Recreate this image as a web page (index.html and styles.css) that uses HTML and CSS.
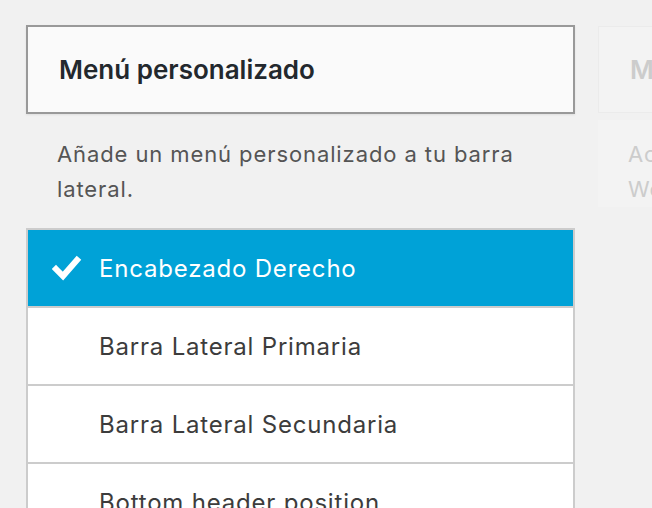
FILE: index.html
```html
<!DOCTYPE html>
<html lang="es">
<head>
    <meta charset="UTF-8">
    <meta name="viewport" content="width=device-width, initial-scale=1.0">
    <title>Menú personalizado</title>
    <link rel="stylesheet" href="styles.css">
</head>
<body>
    <div class="panels">
        <section class="panel">
            <div class="panel-title"><h2>Menú personalizado</h2></div>
            <p class="panel-desc">Añade un menú personalizado a tu barra lateral.</p>
            <ul class="choices">
                <li class="choice selected">
                    <span class="check">
                        <svg width="30" height="26" viewBox="0 0 30 26"><polyline points="4,14 11,21 25,5" fill="none" stroke="#fff" stroke-width="6" stroke-linecap="square"/></svg>
                    </span>
                    Encabezado Derecho
                </li>
                <li class="choice"><span class="check"></span>Barra Lateral Primaria</li>
                <li class="choice"><span class="check"></span>Barra Lateral Secundaria</li>
                <li class="choice"><span class="check"></span>Bottom header position</li>
            </ul>
        </section>

        <!-- siguiente widget, fuera de foco -->
        <section class="panel faded">
            <div class="panel-title"><h2>Meta</h2></div>
            <p class="panel-desc">Acceso, RSS y enlaces de WordPress.org.</p>
        </section>
    </div>
</body>
</html>
```

FILE: styles.css
```css
body {
    margin: 0;
    background-color: #f1f1f1;
    font-family: 'Inter', 'Liberation Sans', Arial, sans-serif;
    overflow: hidden;
}

.panels {
    display: flex;
    gap: 23px;
    padding: 25px 0 0 26px;
}

.panel {
    flex: 0 0 549px;
}

.panel-title {
    height: 85px;
    display: flex;
    align-items: center;
    padding-left: 31px;
    background-color: #fafafa;
    border: 2px solid #999;
    box-shadow: 0 1px 2px rgba(0, 0, 0, 0.08);
}

.panel-title h2 {
    margin: 0;
    font-size: 26px;
    font-weight: 600;
    color: #23282d;
}

.panel-desc {
    margin: 23px 0 21px;
    padding: 0 31px;
    font-size: 22px;
    letter-spacing: 0.9px;
    line-height: 35px;
    color: #555;
}

.choices {
    list-style: none;
    margin: 0;
    padding: 0;
    border: 2px solid #ccc;
    background-color: #fff;
}

.choice {
    height: 76px;
    display: flex;
    align-items: center;
    font-size: 24px;
    letter-spacing: 0.8px;
    color: #3c3c3c;
    border-top: 2px solid #ccc;
}

.choice:first-child {
    border-top: none;
}

.choice.selected {
    background-color: #00a2d7;
    color: #fff;
}

.check {
    width: 71px;
    display: flex;
    justify-content: flex-end;
}

.check svg {
    margin-right: 17px;
}

.faded .panel-title {
    border: 1px solid #ebebeb;
    background-color: #f3f3f3;
    box-shadow: none;
    margin-top: 1px;
    height: 85px;
}

.faded .panel-title h2 {
    color: #ccc;
}

.faded .panel-desc {
    margin-top: 7px;
    padding: 17px 200px 0 30px;
    background-color: #f3f3f3;
    color: #ccc;
}
```
